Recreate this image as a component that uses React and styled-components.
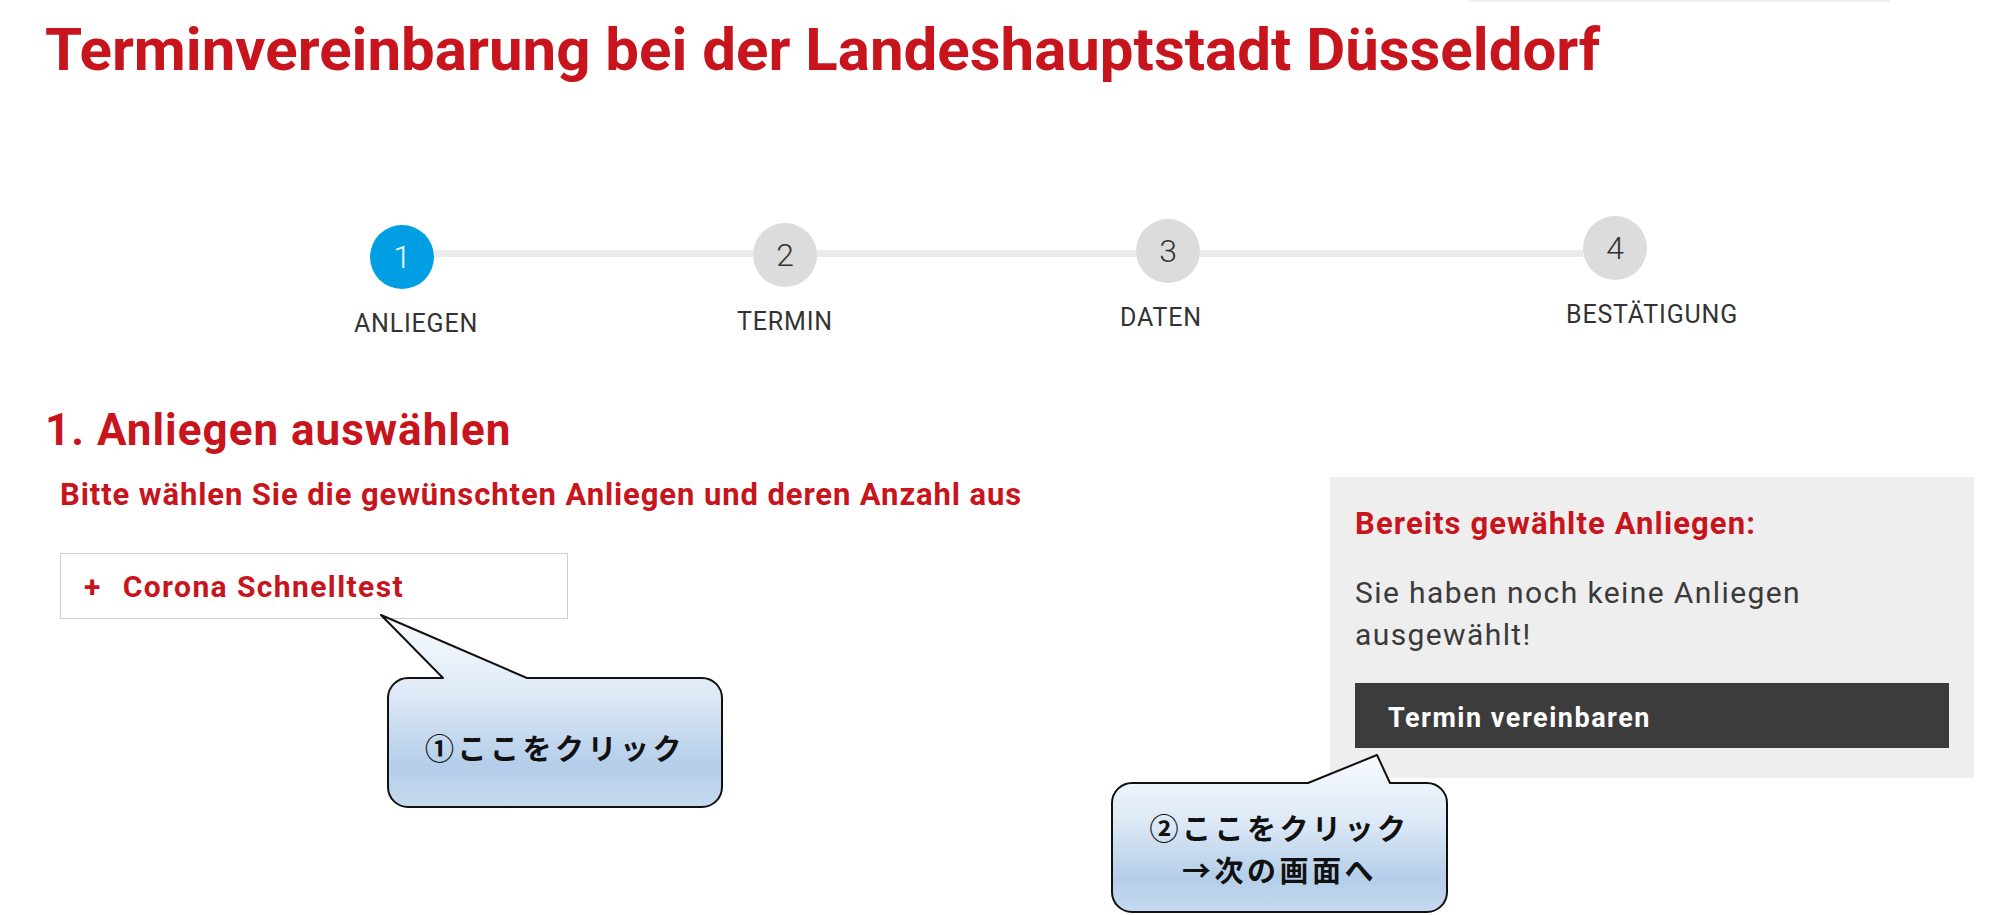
import React, { useId } from 'react'
import styled, { createGlobalStyle } from 'styled-components'

const RED = '#c8141c'

const Global = createGlobalStyle`
  html, body {
    margin: 0;
    background: #fff;
    overflow: hidden;
  }
  body {
    font-family: Roboto, "Noto Sans", Arial, sans-serif;
    color: #333;
  }
`

const Page = styled.div`
  position: relative;
  min-height: 915px;
  padding: 0 26px 0 45px;
  box-sizing: border-box;
`

const TopEdge = styled.div`
  display: flex;
  justify-content: flex-end;
  height: 3px;
`

const Shade = styled.div`
  width: 421px;
  margin-right: 84px;
  background: linear-gradient(#e9e9e9, #fff);
`

const Title = styled.h1`
  margin: 15px 0 0;
  font-size: 60px;
  line-height: 64px;
  font-weight: 700;
  color: ${RED};
`

const Stepper = styled.div`
  display: flex;
  align-items: flex-start;
  margin-top: 134px;
  padding-left: 325px;
`

const Step = styled.div`
  display: flex;
  flex-direction: column;
  align-items: center;
  width: 64px;
  margin-top: ${p => p.$lift}px;
`

const Dot = styled.div`
  width: 64px;
  height: 64px;
  border-radius: 50%;
  display: flex;
  align-items: center;
  justify-content: center;
  font-size: 32px;
  font-weight: 300;
  background: ${p => (p.$active ? '#009fe3' : '#dcdcdc')};
  color: ${p => (p.$active ? '#fff' : '#333')};
`

const StepLabel = styled.div`
  margin-top: 20px;
  font-size: 25px;
  line-height: 30px;
  letter-spacing: 0.8px;
  white-space: nowrap;
  color: #333;
  transform: translateX(${p => p.$dx || 0}px);
`

const Connector = styled.div`
  flex: none;
  width: ${p => p.$w}px;
  height: 7px;
  margin-top: 34px;
  background: #ebebeb;
`

const SectionTitle = styled.h2`
  margin: 65px 0 0;
  font-size: 44px;
  line-height: 52px;
  font-weight: 700;
  letter-spacing: 1px;
  color: ${RED};
`

const Columns = styled.div`
  display: flex;
  align-items: flex-start;
  justify-content: space-between;
  margin-top: 21px;
`

const Main = styled.div`
  flex: 1;
  padding-left: 15px;
`

const Hint = styled.p`
  margin: 0;
  font-size: 31px;
  line-height: 36px;
  font-weight: 700;
  letter-spacing: 0.9px;
  color: ${RED};
`

const ServiceBox = styled.div`
  display: flex;
  align-items: center;
  box-sizing: border-box;
  width: 508px;
  height: 66px;
  margin-top: 40px;
  padding-left: 23px;
  border: 1px solid #cfcfcf;
  font-size: 30px;
  font-weight: 700;
  letter-spacing: 1.4px;
  color: ${RED};
`

const Plus = styled.span`
  margin-right: 21px;
`

const Cart = styled.aside`
  flex: none;
  width: 644px;
  box-sizing: border-box;
  padding: 29px 25px 30px;
  background: #eeeeee;
`

const CartTitle = styled.h3`
  margin: 0;
  font-size: 31px;
  line-height: 36px;
  font-weight: 700;
  letter-spacing: 1.1px;
  color: ${RED};
`

const CartText = styled.p`
  margin: 30px 0 0;
  font-size: 30px;
  line-height: 42px;
  letter-spacing: 1.4px;
  color: #3a3a3a;
`

const BookButton = styled.div`
  display: flex;
  align-items: center;
  height: 65px;
  box-sizing: border-box;
  margin-top: 27px;
  padding: 4px 0 0 33px;
  background: #3c3c3c;
  color: #fff;
  font-size: 27px;
  font-weight: 700;
  letter-spacing: 1.5px;
`

// annotation bubbles laid over the page
const Bubble = styled.div`
  position: absolute;
  left: ${p => p.$x}px;
  top: ${p => p.$y}px;
  width: ${p => p.$w}px;
  height: ${p => p.$h}px;
  display: flex;
  align-items: center;
  justify-content: center;
`

const BubbleShape = styled.svg`
  position: absolute;
  left: 0;
  top: 0;
  overflow: visible;
`

const BubbleText = styled.div`
  position: relative;
  display: flex;
  flex-direction: column;
  align-items: center;
  padding-top: ${p => p.$nudge || 0}px;
  font-family: "Noto Sans CJK JP", "Noto Sans", sans-serif;
  font-size: 29px;
  line-height: 42px;
  font-weight: 700;
  letter-spacing: 3.5px;
  color: #111;
`

function Callout({ x, y, w, h, tail, nudge, lines }) {
  const id = useId().replace(/:/g, '')
  const [b1, tx, ty, b2] = tail
  const r = 20
  const d = `M${r + 1},1 L${b1},1 L${tx},${ty} L${b2},1 L${w - r - 1},1 A${r},${r} 0 0 1 ${w - 1},${r + 1}
    L${w - 1},${h - r - 1} A${r},${r} 0 0 1 ${w - r - 1},${h - 1} L${r + 1},${h - 1}
    A${r},${r} 0 0 1 1,${h - r - 1} L1,${r + 1} A${r},${r} 0 0 1 ${r + 1},1 Z`
  return (
    <Bubble $x={x} $y={y} $w={w} $h={h}>
      <BubbleShape width={w} height={h} viewBox={`0 0 ${w} ${h}`}>
        <defs>
          <linearGradient id={id} x1="0" y1={ty} x2="0" y2={h} gradientUnits="userSpaceOnUse">
            <stop offset="0" stopColor="#f8fbfe" />
            <stop offset="0.4" stopColor="#dfeaf7" />
            <stop offset="0.78" stopColor="#b4cee9" />
            <stop offset="1" stopColor="#c6daef" />
          </linearGradient>
        </defs>
        <path d={d} fill={`url(#${id})`} stroke="#111" strokeWidth="2" strokeLinejoin="round" />
      </BubbleShape>
      <BubbleText $nudge={nudge}>
        {lines.map(l => <span key={l}>{l}</span>)}
      </BubbleText>
    </Bubble>
  )
}

const steps = [
  { n: 1, label: 'ANLIEGEN', lift: 9, dx: 14, active: true },
  { n: 2, label: 'TERMIN', lift: 7, dx: 0 },
  { n: 3, label: 'DATEN', lift: 3, dx: -7 },
  { n: 4, label: 'BESTÄTIGUNG', lift: 0, dx: 37 },
]
const gaps = [319, 319, 383]

export default function App() {
  return (
    <>
      <Global />
      <Page>
        <TopEdge><Shade /></TopEdge>
        <Title>Terminvereinbarung bei der Landeshauptstadt Düsseldorf</Title>

        <Stepper>
          {steps.map((s, i) => (
            <React.Fragment key={s.n}>
              <Step $lift={s.lift}>
                <Dot $active={s.active}>{s.n}</Dot>
                <StepLabel $dx={s.dx}>{s.label}</StepLabel>
              </Step>
              {i < gaps.length && <Connector $w={gaps[i]} />}
            </React.Fragment>
          ))}
        </Stepper>

        <SectionTitle>1. Anliegen auswählen</SectionTitle>

        <Columns>
          <Main>
            <Hint>Bitte wählen Sie die gewünschten Anliegen und deren Anzahl aus</Hint>
            <ServiceBox><Plus>+</Plus>Corona Schnelltest</ServiceBox>
          </Main>
          <Cart>
            <CartTitle>Bereits gewählte Anliegen:</CartTitle>
            <CartText>Sie haben noch keine Anliegen ausgewählt!</CartText>
            <BookButton>Termin vereinbaren</BookButton>
          </Cart>
        </Columns>

        <Callout x={387} y={677} w={336} h={131} tail={[56, -6, -62, 140]} nudge={9}
          lines={['①ここをクリック']} />
        <Callout x={1111} y={782} w={337} h={131} tail={[197, 266, -27, 279]} nudge={-7}
          lines={['②ここをクリック', '→次の画面へ']} />
      </Page>
    </>
  )
}
